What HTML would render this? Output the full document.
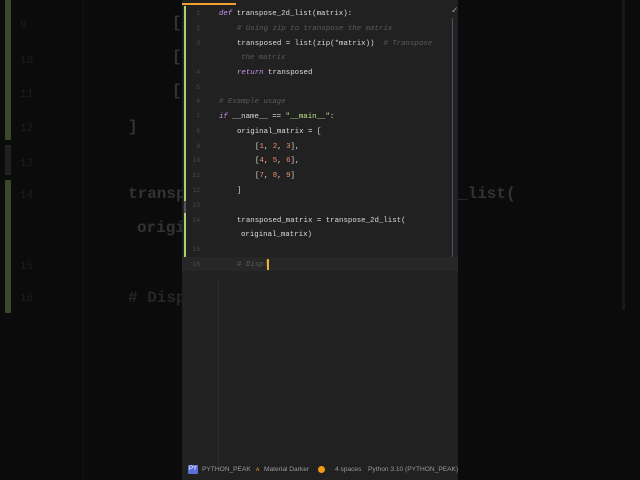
<!DOCTYPE html>
<html><head><meta charset="utf-8"><style>
*{margin:0;padding:0;box-sizing:border-box}
body{width:640px;height:480px;background:#0b0b0b;position:relative;overflow:hidden;font-family:"Liberation Mono",monospace}
.big{position:absolute;font-size:16px;color:#333;font-weight:bold;white-space:pre}
.bn{position:absolute;font-size:11px;color:#1e1e1e;white-space:pre}
#ed{position:absolute;left:182px;top:0;width:276px;height:480px;background:#212121}
.l{position:absolute;font-size:7.4px;color:#dcdcdc;white-space:pre;line-height:12px}
.n{position:absolute;left:6px;width:12px;text-align:right;font-size:6px;color:#4a4a4a;line-height:12px}
.c{color:#5a5a5a;font-style:italic}
.k{color:#c792ea;font-style:italic}
.s{color:#c3e88d}
.num{color:#f78c6c}
.st{position:absolute;top:466px;font-family:"Liberation Sans",sans-serif;font-size:6.6px;color:#9a9a9a;white-space:pre}
</style></head><body>
<div style="position:absolute;left:5px;top:0;width:6px;height:140px;background:#3b4a26"></div>
<div style="position:absolute;left:5px;top:145px;width:6px;height:30px;background:#202020"></div>
<div style="position:absolute;left:5px;top:180px;width:6px;height:133px;background:#3b4a26"></div>
<div style="position:absolute;left:82px;top:0;width:2px;height:480px;background:#0f0f0f"></div>
<div class="bn" style="left:20px;top:20px">9</div>
<div class="bn" style="left:20px;top:55px">10</div>
<div class="bn" style="left:20px;top:89px">11</div>
<div class="bn" style="left:20px;top:123px">12</div>
<div class="bn" style="left:20px;top:158px">13</div>
<div class="bn" style="left:20px;top:190px">14</div>
<div class="bn" style="left:20px;top:261px">15</div>
<div class="bn" style="left:20px;top:293px">16</div>
<div class="big" style="left:172px;top:14px">[</div>
<div class="big" style="left:172px;top:48px">[</div>
<div class="big" style="left:172px;top:82px">[</div>
<div class="big" style="left:128px;top:118px">]</div>
<div class="big" style="left:128px;top:185px">transpose</div>
<div class="big" style="left:137px;top:219px">original</div>
<div class="big" style="left:128px;top:289px;color:#262626"># Displ</div>
<div class="big" style="left:458px;top:185px">_list(</div>
<div style="position:absolute;left:622px;top:0;width:3px;height:310px;background:#161a20"></div>

<div id="ed">
<div style="position:absolute;left:0;top:3px;width:54px;height:2px;background:#f0a030"></div>
<div style="position:absolute;left:2px;top:6px;width:2px;height:195px;background:#a5d46a"></div>
<div style="position:absolute;left:2px;top:201px;width:2px;height:12px;background:#555"></div>
<div style="position:absolute;left:2px;top:213px;width:2px;height:58px;background:#a5d46a"></div>
<div style="position:absolute;left:270px;top:18px;width:1px;height:252px;background:#41556e"></div>
<div style="position:absolute;left:0;top:257px;width:276px;height:14px;background:#272727"></div>
<div style="position:absolute;left:36px;top:280px;width:1px;height:185px;background:#2c2c2c"></div>
<div style="position:absolute;left:269px;top:6px;font-size:9px;color:#8a8;font-family:'DejaVu Sans'">✓</div>
<div class="n" style="top:8px">1</div><div class="l" style="left:37px;top:8px"><span class="k">def</span> transpose_2d_list(matrix):</div>
<div class="n" style="top:23px">2</div><div class="l c" style="left:55px;top:23px"># Using zip to transpose the matrix</div>
<div class="n" style="top:38px">3</div><div class="l" style="left:55px;top:38px">transposed = list(zip(*matrix))  <span class="c"># Transpose</span></div>
<div class="l c" style="left:59px;top:52px">the matrix</div>
<div class="n" style="top:67px">4</div><div class="l" style="left:55px;top:67px"><span class="k">return</span> transposed</div>
<div class="n" style="top:82px">5</div>
<div class="n" style="top:96px">6</div><div class="l c" style="left:37px;top:96px"># Example usage</div>
<div class="n" style="top:111px">7</div><div class="l" style="left:37px;top:111px"><span class="k">if</span> __name__ == <span class="s">"__main__"</span>:</div>
<div class="n" style="top:126px">8</div><div class="l" style="left:55px;top:126px">original_matrix = [</div>
<div class="n" style="top:141px">9</div><div class="l" style="left:73px;top:141px">[<span class="num">1</span>, <span class="num">2</span>, <span class="num">3</span>],</div>
<div class="n" style="top:155px">10</div><div class="l" style="left:73px;top:155px">[<span class="num">4</span>, <span class="num">5</span>, <span class="num">6</span>],</div>
<div class="n" style="top:170px">11</div><div class="l" style="left:73px;top:170px">[<span class="num">7</span>, <span class="num">8</span>, <span class="num">9</span>]</div>
<div class="n" style="top:185px">12</div><div class="l" style="left:55px;top:185px">]</div>
<div class="n" style="top:200px">13</div>
<div class="n" style="top:215px">14</div><div class="l" style="left:55px;top:215px">transposed_matrix = transpose_2d_list(</div>
<div class="l" style="left:59px;top:229px">original_matrix)</div>
<div class="n" style="top:244px">15</div>
<div class="n" style="top:259px">16</div><div class="l c" style="left:55px;top:259px"># Displ</div>
<div style="position:absolute;left:85px;top:259px;width:2px;height:11px;background:#f0b030"></div>
<div style="position:absolute;left:6px;top:465px;width:10px;height:9px;background:#5a6fd8;border-radius:1px;font-size:6px;color:#fff;text-align:center;line-height:9px;font-family:'Liberation Sans'">PY</div>
<div class="st" style="left:20px">PYTHON_PEAK</div>
<div class="st" style="left:74px;color:#f0a030">ʌ</div>
<div class="st" style="left:82px">Material Darker</div>
<div style="position:absolute;left:136px;top:466px;width:7px;height:7px;border-radius:50%;background:#f39c12"></div>
<div class="st" style="left:153px">4 spaces</div>
<div class="st" style="left:186px">Python 3.10 (PYTHON_PEAK)</div>
</div>
</body></html>
